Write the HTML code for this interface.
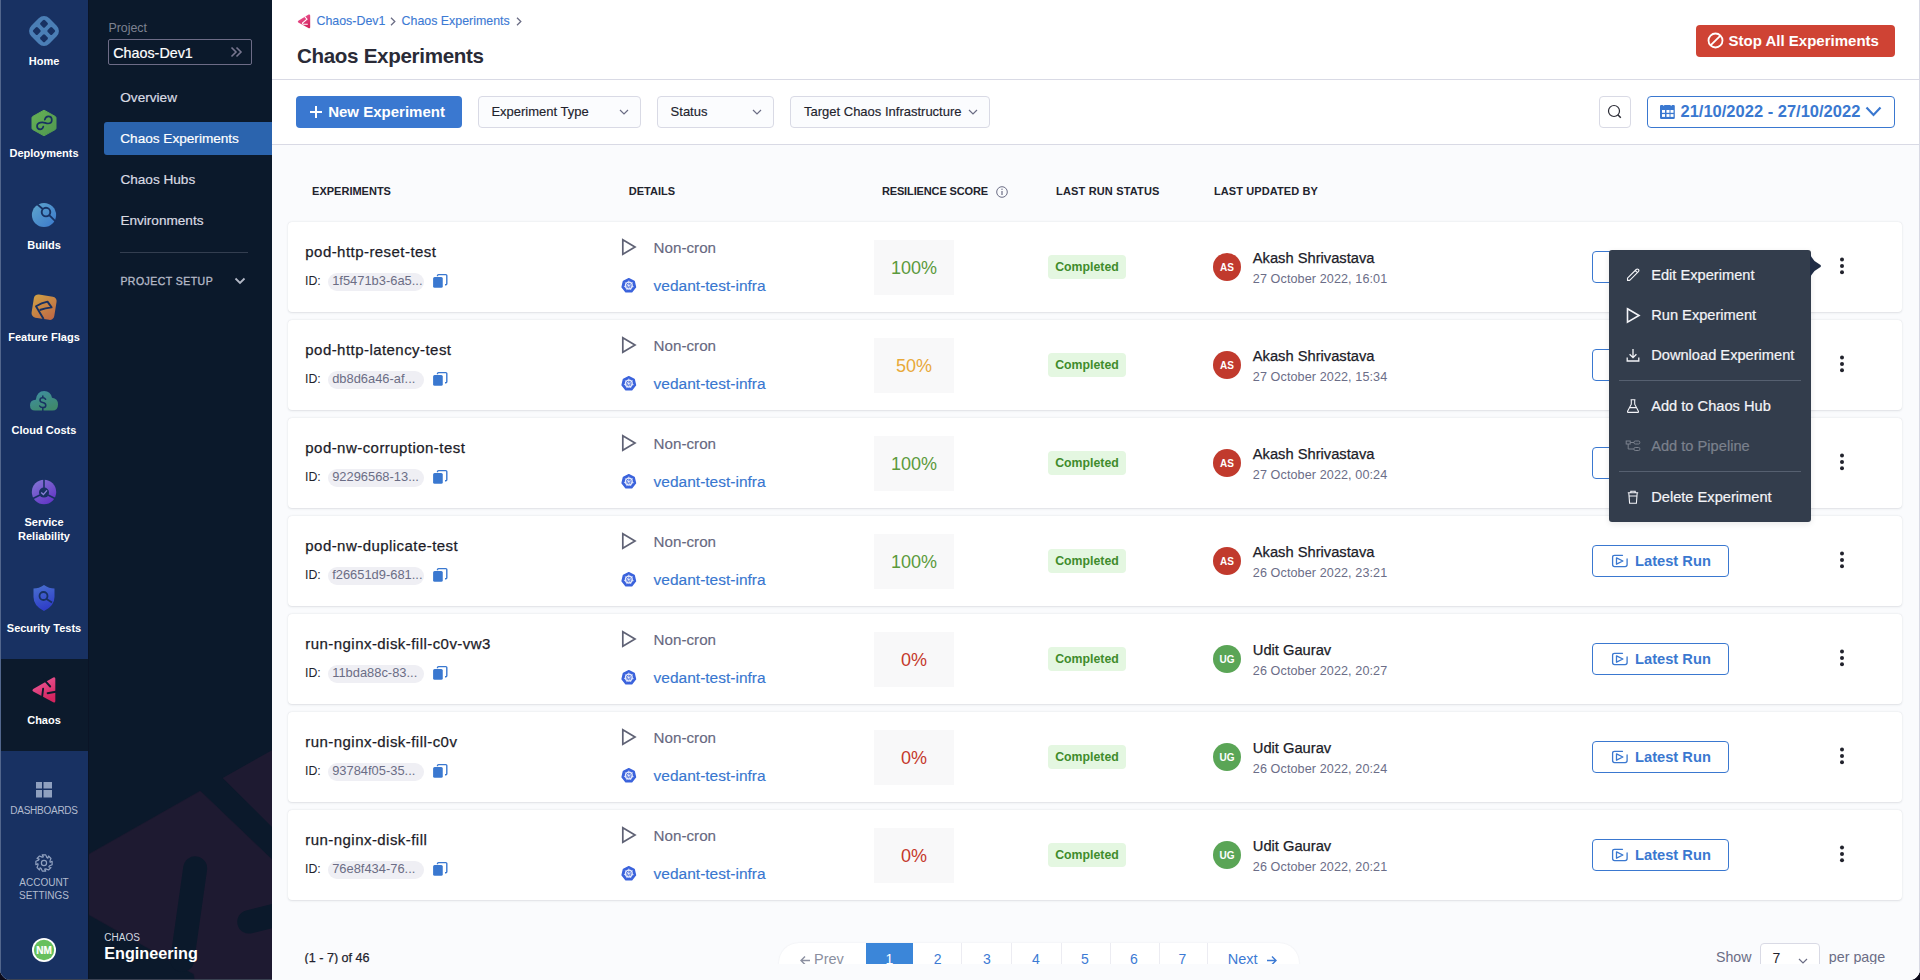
<!DOCTYPE html>
<html><head><meta charset="utf-8">
<style>
*{box-sizing:border-box;margin:0;padding:0}
html,body{width:1920px;height:980px;overflow:hidden;background:#0b0a1a;font-family:"Liberation Sans",sans-serif}
.abs{position:absolute}
svg.abs{overflow:visible}
#app{position:absolute;left:0;top:0;width:1920px;height:980px;border-radius:0 0 11px 11px;overflow:hidden;background:#fafbfd}
.t{position:absolute;white-space:nowrap;line-height:1}
</style></head><body>
<div id='app'>
<div class="abs" style="left:0px;top:0px;width:88px;height:980px;background:#183162"></div>
<div class="abs" style="left:0px;top:0px;width:1px;height:980px;background:#52668c"></div>
<div class="abs" style="left:88px;top:0px;width:1px;height:980px;background:#0a1426"></div>
<div class="abs" style="left:1px;top:659px;width:87px;height:92px;background:#0c1a2c"></div>
<svg class="abs" style="left:29px;top:16px;" width="30" height="30" viewBox="0 0 30 30"><g transform="rotate(45 15 15)"><rect x="2.25" y="2.25" width="25.5" height="25.5" rx="7.5" fill="#4b7fb6"/><rect x="6.7" y="6.7" width="6.4" height="6.4" rx="1.5" fill="#183162"/><rect x="16.9" y="6.7" width="6.4" height="6.4" rx="1.5" fill="#183162"/><rect x="6.7" y="16.9" width="6.4" height="6.4" rx="1.5" fill="#183162"/><rect x="16.9" y="16.9" width="6.4" height="6.4" rx="1.5" fill="#183162"/></g></svg>
<div class="t" style="left:0.00px;width:88px;text-align:center;top:55.69px;font-size:11px;color:#fff;font-weight:700;">Home</div>
<svg class="abs" style="left:31px;top:109px;" width="26" height="28" viewBox="0 0 26 28"><defs><linearGradient id="gd" x1="0" y1="0" x2="1" y2="1"><stop offset="0" stop-color="#66b155"/><stop offset="1" stop-color="#4f9650"/></linearGradient></defs><path d="M13 1.2 L24.2 7.4 Q25 7.9 25 8.8 L25 19.2 Q25 20.1 24.2 20.6 L13 26.8 L1.8 20.6 Q1 20.1 1 19.2 L1 8.8 Q1 7.9 1.8 7.4 Z" fill="url(#gd)" stroke="url(#gd)" stroke-width="1" stroke-linejoin="round"/><path d="M13.8 10.6 C14.3 8.7 15.6 7.4 17.3 7.4 C19.3 7.4 20.8 9 20.8 11 C20.8 13 19.2 14.5 17 14.5 C15 14.5 13.5 13.4 11.5 13.3 C8.3 13.2 6 14.8 6 17 C6 18.9 7.4 20.3 9.2 20.3 C10.8 20.3 11.9 19.2 12.3 17.6" fill="none" stroke="#183162" stroke-width="1.7" stroke-linecap="round"/></svg>
<div class="t" style="left:0.00px;width:88px;text-align:center;top:147.69px;font-size:11px;color:#fff;font-weight:700;">Deployments</div>
<svg class="abs" style="left:31px;top:202px;" width="26" height="26" viewBox="0 0 26 26"><defs><linearGradient id="gb" x1="0" y1="0" x2="1" y2="1"><stop offset="0" stop-color="#5fa6cc"/><stop offset="1" stop-color="#3a78cc"/></linearGradient></defs><circle cx="13" cy="13" r="12.1" fill="url(#gb)"/><circle cx="15" cy="10.1" r="4.3" fill="none" stroke="#183162" stroke-width="1.9"/><line x1="5.5" y1="1.6" x2="12" y2="7.3" stroke="#183162" stroke-width="1.8"/><line x1="18.2" y1="13.2" x2="24.8" y2="19.6" stroke="#183162" stroke-width="1.8"/></svg>
<div class="t" style="left:0.00px;width:88px;text-align:center;top:239.69px;font-size:11px;color:#fff;font-weight:700;">Builds</div>
<svg class="abs" style="left:30px;top:293px;" width="28" height="28" viewBox="0 0 28 28"><defs><linearGradient id="gf" x1="0" y1="0" x2="1" y2="1"><stop offset="0" stop-color="#d0a245"/><stop offset="1" stop-color="#bd6545"/></linearGradient></defs><rect x="2.6" y="2.4" width="23" height="23.5" rx="4.5" fill="url(#gf)" transform="rotate(9 14 14)"/><path d="M13.6 26 L6 13.2 Q11.5 9.8 17.5 8.6 L21.6 14.4 Q15.5 15 9.7 17" fill="none" stroke="#183162" stroke-width="1.9" stroke-linejoin="round"/></svg>
<div class="t" style="left:0.00px;width:88px;text-align:center;top:331.69px;font-size:11px;color:#fff;font-weight:700;">Feature Flags</div>
<svg class="abs" style="left:29px;top:389px;" width="30" height="23" viewBox="0 0 30 23"><defs><linearGradient id="gc" x1="0" y1="0" x2="0.6" y2="1"><stop offset="0" stop-color="#3f8fa6"/><stop offset="1" stop-color="#3f8a6c"/></linearGradient></defs><path d="M6 21.5 Q1 21.5 1 16.3 Q1 11.2 6.8 10.8 Q8 2 15.2 2 Q21.5 2 23 8.8 Q29 9.5 29 15.5 Q29 21.5 23.5 21.5 Z" fill="url(#gc)"/><g transform="translate(-1.2 0)"><path d="M17.8 10.3 Q17 8.8 15 8.8 Q12.2 8.8 12.2 11 Q12.2 13 15 13.6 Q18 14.3 18 16.4 Q18 18.6 15 18.6 Q12.6 18.6 11.9 17" fill="none" stroke="#183162" stroke-width="1.5" stroke-linecap="round"/><line x1="15" y1="6.5" x2="15" y2="8.8" stroke="#183162" stroke-width="1.5"/><line x1="15" y1="18.6" x2="15" y2="22" stroke="#183162" stroke-width="1.5"/></g></svg>
<div class="t" style="left:0.00px;width:88px;text-align:center;top:424.69px;font-size:11px;color:#fff;font-weight:700;">Cloud Costs</div>
<svg class="abs" style="left:31px;top:479px;" width="26" height="26" viewBox="0 0 26 26"><defs><linearGradient id="gs" x1="0" y1="0" x2="0.7" y2="1"><stop offset="0" stop-color="#8579d4"/><stop offset="1" stop-color="#6236c6"/></linearGradient></defs><circle cx="13" cy="13" r="12.2" fill="url(#gs)"/><circle cx="13" cy="13.6" r="5" fill="#183162"/><line x1="13" y1="0" x2="13" y2="9" stroke="#183162" stroke-width="1.6"/><line x1="9" y1="16" x2="1.5" y2="19.8" stroke="#183162" stroke-width="1.6"/><line x1="17" y1="16" x2="24.5" y2="19.8" stroke="#183162" stroke-width="1.6"/><path d="M10.2 13.6 L12.4 15.6 L16 11.4" fill="none" stroke="#8a80d8" stroke-width="1.4"/></svg>
<div class="t" style="left:0.00px;width:88px;text-align:center;top:517.29px;font-size:11px;color:#fff;font-weight:700;">Service</div>
<div class="t" style="left:0.00px;width:88px;text-align:center;top:530.89px;font-size:11px;color:#fff;font-weight:700;">Reliability</div>
<svg class="abs" style="left:32px;top:584px;" width="24" height="28" viewBox="0 0 24 28"><defs><linearGradient id="gt" x1="0" y1="0" x2="0.3" y2="1"><stop offset="0" stop-color="#4a72d0"/><stop offset="1" stop-color="#2f3ec8"/></linearGradient></defs><path d="M12 1 Q17 4.5 22.5 4.5 L22.5 13 Q22.5 22 12 27 Q1.5 22 1.5 13 L1.5 4.5 Q7 4.5 12 1 Z" fill="url(#gt)"/><circle cx="11.5" cy="12" r="4" fill="none" stroke="#183162" stroke-width="1.8"/><line x1="14.5" y1="15" x2="20" y2="18.5" stroke="#183162" stroke-width="1.8"/></svg>
<div class="t" style="left:0.00px;width:88px;text-align:center;top:622.69px;font-size:11px;color:#fff;font-weight:700;">Security Tests</div>
<svg class="abs" style="left:31px;top:675px;" width="26" height="30" viewBox="0 0 26 30"><defs><linearGradient id="gch" x1="0" y1="0" x2="0.5" y2="1"><stop offset="0" stop-color="#ee62a0"/><stop offset="1" stop-color="#d4245f"/></linearGradient></defs><path d="M22.3 2.4 Q24.3 1.6 24.3 3.8 L24.3 26 Q24.3 28.2 22.3 27.3 L2.2 16.6 Q0.4 15.2 2.2 14 Z" fill="url(#gch)"/><g stroke="#0c1a2c" stroke-width="1.9" stroke-linecap="round"><line x1="13" y1="4.6" x2="19.2" y2="11.5"/><line x1="11" y1="23" x2="12.1" y2="13.8"/><line x1="26" y1="16.5" x2="16.6" y2="18.2"/></g></svg>
<div class="t" style="left:0.00px;width:88px;text-align:center;top:714.69px;font-size:11px;color:#fff;font-weight:700;">Chaos</div>
<svg class="abs" style="left:36px;top:782px;" width="16" height="16" viewBox="0 0 16 16"><rect x="0" y="0" width="6" height="6.5" fill="#8fa0bf"/><rect x="7.5" y="0" width="8.5" height="6.5" fill="#8fa0bf"/><rect x="0" y="8" width="6" height="7.5" fill="#8fa0bf"/><rect x="7.5" y="8" width="8.5" height="7.5" fill="#8fa0bf"/></svg>
<div class="t" style="left:0.00px;width:88px;text-align:center;top:805.53px;font-size:10px;color:#b3bccf;font-weight:400;letter-spacing:-0.25px">DASHBOARDS</div>
<svg class="abs" style="left:36px;top:855px;" width="16" height="16" viewBox="0 0 16 16"><path d="M16.12 6.27 L16.12 9.73 L13.51 10.84 L12.84 11.88 L14.96 12.52 L12.52 14.96 L9.89 13.91 L8.68 14.16 L9.73 16.12 L6.27 16.12 L5.16 13.51 L4.12 12.84 L3.48 14.96 L1.04 12.52 L2.09 9.89 L1.84 8.68 L-0.12 9.73 L-0.12 6.27 L2.49 5.16 L3.16 4.12 L1.04 3.48 L3.48 1.04 L6.11 2.09 L7.32 1.84 L6.27 -0.12 L9.73 -0.12 L10.84 2.49 L11.88 3.16 L12.52 1.04 L14.96 3.48 L13.91 6.11 L14.16 7.32Z" fill="none" stroke="#8fa0bf" stroke-width="1.2" stroke-linejoin="round"/><circle cx="8" cy="8" r="2.6" fill="none" stroke="#8fa0bf" stroke-width="1.2"/></svg>
<div class="t" style="left:0.00px;width:88px;text-align:center;top:878.33px;font-size:10px;color:#b3bccf;font-weight:400;">ACCOUNT</div>
<div class="t" style="left:0.00px;width:88px;text-align:center;top:891.13px;font-size:10px;color:#b3bccf;font-weight:400;">SETTINGS</div>
<svg class="abs" style="left:31px;top:937px;" width="26" height="26" viewBox="0 0 26 26"><circle cx="13" cy="13" r="12" fill="#fff"/><circle cx="13" cy="13" r="10.2" fill="#67c05d"/></svg>
<div class="t" style="left:24.20px;width:40px;text-align:center;top:945.53px;font-size:10px;color:#fff;font-weight:700;letter-spacing:0.2px;-webkit-text-stroke:0.2px #fff">NM</div>
<div class="abs" style="left:89px;top:0px;width:183px;height:980px;background:#0b192b"></div>
<svg class="abs" style="left:89px;top:700px;overflow:hidden" width="183" height="280" viewBox="0 0 183 280"><g transform="translate(-89 -700)"><polygon points="222.7,778 272,750.2 272,826.9" fill="#1e1a31"/><polygon points="200.3,791 272,859.6 272,990 197,990 193.7,974 88,914.3 88,854.7" fill="#1e1a31" stroke="#1e1a31" stroke-width="0.5" stroke-linejoin="round"/><line x1="195.2" y1="868.3" x2="182.2" y2="960" stroke="#0b192b" stroke-width="24" stroke-linecap="round"/><line x1="249" y1="921.8" x2="300" y2="909" stroke="#0b192b" stroke-width="23.5" stroke-linecap="round"/></g></svg>
<div class="abs" style="left:1px;top:979px;width:271px;height:1px;background:#3b4252"></div>
<div class="t" style="left:108.4px;top:21.70px;font-size:12.4px;color:#7d8291;font-weight:400;">Project</div>
<div class="abs" style="left:108px;top:39px;width:144px;height:26px;border:1px solid #6d6c87;border-radius:2px"></div>
<div class="t" style="left:113.3px;top:46.10px;font-size:14.3px;color:#fff;font-weight:400;-webkit-text-stroke:0.2px #fff">Chaos-Dev1</div>
<svg class="abs" style="left:230px;top:46px;" width="13" height="12" viewBox="0 0 13 12"><path d="M1.5 1.5 L6 6 L1.5 10.5 M6.5 1.5 L11 6 L6.5 10.5" fill="none" stroke="#77768f" stroke-width="1.6"/></svg>
<div class="t" style="left:120.3px;top:91.09px;font-size:13.6px;color:#d9dbe3;font-weight:400;-webkit-text-stroke:0.2px #d9dbe3">Overview</div>
<div class="abs" style="left:104px;top:122px;width:168px;height:33px;background:#2b64ae;border-radius:3px 0 0 3px"></div>
<div class="t" style="left:120.3px;top:131.69px;font-size:13.6px;color:#fff;font-weight:400;-webkit-text-stroke:0.2px #fff">Chaos Experiments</div>
<div class="t" style="left:120.4px;top:173.49px;font-size:13.6px;color:#d9dbe3;font-weight:400;-webkit-text-stroke:0.2px #d9dbe3">Chaos Hubs</div>
<div class="t" style="left:120.4px;top:214.49px;font-size:13.6px;color:#d9dbe3;font-weight:400;-webkit-text-stroke:0.2px #d9dbe3">Environments</div>
<div class="abs" style="left:120px;top:252px;width:128px;height:1px;background:#333e50"></div>
<div class="t" style="left:120.4px;top:276.11px;font-size:10.5px;color:#b3b8c6;font-weight:400;letter-spacing:0.46px;-webkit-text-stroke:0.35px #b3b8c6">PROJECT SETUP</div>
<svg class="abs" style="left:234px;top:277px;" width="12" height="8" viewBox="0 0 12 8"><path d="M1.5 1.5 L6 6 L10.5 1.5" fill="none" stroke="#b3b8c6" stroke-width="1.8"/></svg>
<div class="t" style="left:104.3px;top:932.63px;font-size:10px;color:#d5d8e0;font-weight:400;">CHAOS</div>
<div class="t" style="left:104.3px;top:945.29px;font-size:16.2px;color:#fff;font-weight:700;">Engineering</div>
<div class="abs" style="left:272px;top:0px;width:1648px;height:980px;background:#fafbfd"></div>
<div class="abs" style="left:272px;top:0px;width:1647px;height:79px;background:#fff"></div>
<div class="abs" style="left:272px;top:79px;width:1647px;height:1px;background:#d9dae5"></div>
<div class="abs" style="left:272px;top:80px;width:1647px;height:64px;background:#fff"></div>
<div class="abs" style="left:272px;top:144px;width:1647px;height:1px;background:#d9dae5"></div>
<div class="abs" style="left:1919px;top:0px;width:1px;height:980px;background:#d8d9e4"></div>
<svg class="abs" style="left:297px;top:14px;" width="14" height="15" viewBox="0 0 14 15"><defs><linearGradient id="gbc" x1="0" y1="0" x2="0.5" y2="1"><stop offset="0" stop-color="#ee5e9a"/><stop offset="1" stop-color="#d4245f"/></linearGradient></defs><path d="M11.6 0.6 Q13.2 0.2 13.2 1.8 L13.2 13.2 Q13.2 14.8 11.8 14.2 L1.3 8.6 Q0.2 7.8 1.3 6.8 Z" fill="url(#gbc)"/><path d="M7.8 2.6 L10 5.2 L5.4 9.2 L6 10.3 L10.8 10.3" fill="none" stroke="#fff" stroke-width="1.1"/></svg>
<div class="t" style="left:316.5px;top:15.10px;font-size:12.4px;color:#3c7ad4;font-weight:400;-webkit-text-stroke:0.12px #3c7ad4">Chaos-Dev1</div>
<svg class="abs" style="left:389px;top:16px;" width="8" height="11" viewBox="0 0 8 11"><path d="M2 1.8 L5.8 5.5 L2 9.2" fill="none" stroke="#6b6d85" stroke-width="1.3"/></svg>
<div class="t" style="left:401.6px;top:15.10px;font-size:12.4px;color:#3c7ad4;font-weight:400;-webkit-text-stroke:0.12px #3c7ad4">Chaos Experiments</div>
<svg class="abs" style="left:515px;top:16px;" width="8" height="11" viewBox="0 0 8 11"><path d="M2 1.8 L5.8 5.5 L2 9.2" fill="none" stroke="#6b6d85" stroke-width="1.3"/></svg>
<div class="t" style="left:296.9px;top:45.86px;font-size:20.6px;color:#2a2b37;font-weight:700;letter-spacing:-0.32px;">Chaos Experiments</div>
<div class="abs" style="left:1696px;top:25px;width:199px;height:32px;background:#cf4334;border-radius:4px"></div>
<svg class="abs" style="left:1707px;top:32px;" width="17" height="17" viewBox="0 0 17 17"><circle cx="8.5" cy="8.5" r="7" fill="none" stroke="#fff" stroke-width="1.8"/><line x1="3.8" y1="13.2" x2="13.2" y2="3.8" stroke="#fff" stroke-width="1.8"/></svg>
<div class="t" style="left:1728.6px;top:33.10px;font-size:15px;color:#fff;font-weight:700;">Stop All Experiments</div>
<div class="abs" style="left:296px;top:96px;width:166px;height:32px;background:#3a78d0;border-radius:4px"></div>
<svg class="abs" style="left:309px;top:105px;" width="14" height="14" viewBox="0 0 14 14"><path d="M7 1 V13 M1 7 H13" stroke="#fff" stroke-width="2"/></svg>
<div class="t" style="left:328.2px;top:103.80px;font-size:15px;color:#fff;font-weight:700;">New Experiment</div>
<div class="abs" style="left:478px;top:96px;width:163px;height:32px;background:#fbfcfe;border:1px solid #d9dae5;border-radius:4px"></div>
<div class="t" style="left:491.4px;top:105.40px;font-size:13px;color:#22232d;font-weight:400;-webkit-text-stroke:0.15px #22232d">Experiment Type</div>
<svg class="abs" style="left:619px;top:109px;" width="10" height="6" viewBox="0 0 10 6"><path d="M1 1 L5 5 L9 1" fill="none" stroke="#6b6d85" stroke-width="1.2"/></svg>
<div class="abs" style="left:657px;top:96px;width:117px;height:32px;background:#fbfcfe;border:1px solid #d9dae5;border-radius:4px"></div>
<div class="t" style="left:670.6px;top:105.40px;font-size:13px;color:#22232d;font-weight:400;-webkit-text-stroke:0.15px #22232d">Status</div>
<svg class="abs" style="left:752px;top:109px;" width="10" height="6" viewBox="0 0 10 6"><path d="M1 1 L5 5 L9 1" fill="none" stroke="#6b6d85" stroke-width="1.2"/></svg>
<div class="abs" style="left:790px;top:96px;width:200px;height:32px;background:#fbfcfe;border:1px solid #d9dae5;border-radius:4px"></div>
<div class="t" style="left:804px;top:105.40px;font-size:13px;color:#22232d;font-weight:400;-webkit-text-stroke:0.15px #22232d">Target Chaos Infrastructure</div>
<svg class="abs" style="left:968px;top:109px;" width="10" height="6" viewBox="0 0 10 6"><path d="M1 1 L5 5 L9 1" fill="none" stroke="#6b6d85" stroke-width="1.2"/></svg>
<div class="abs" style="left:1599px;top:96px;width:32px;height:32px;background:#fff;border:1px solid #d9dae5;border-radius:4px"></div>
<svg class="abs" style="left:1607px;top:104px;" width="16" height="16" viewBox="0 0 16 16"><circle cx="7" cy="7" r="5.5" fill="none" stroke="#2a2b35" stroke-width="1.2"/><line x1="10.8" y1="10.8" x2="13.8" y2="13.8" stroke="#2a2b35" stroke-width="1.5"/></svg>
<div class="abs" style="left:1647px;top:96px;width:248px;height:32px;background:#fff;border:1px solid #3a78d0;border-radius:4px"></div>
<svg class="abs" style="left:1660px;top:104px;" width="15" height="15" viewBox="0 0 15 15"><rect x="0" y="0.9" width="14.8" height="14" rx="1.2" fill="#3a78d0"/><g fill="#fff"><circle cx="3.6" cy="0.9" r="0.8"/><circle cx="11.2" cy="0.9" r="0.8"/><rect x="2" y="6" width="3" height="2.8"/><rect x="6.5" y="6" width="3" height="2.8"/><rect x="10.5" y="6" width="3" height="2.8"/><rect x="2" y="10.1" width="3" height="2.8"/><rect x="6.5" y="10.1" width="3" height="2.8"/><rect x="10.5" y="10.1" width="3" height="2.8"/></g></svg>
<div class="t" style="left:1680.5px;top:103.33px;font-size:16.5px;color:#3a78d0;font-weight:700;">21/10/2022 - 27/10/2022</div>
<svg class="abs" style="left:1865px;top:106px;" width="17" height="11" viewBox="0 0 17 11"><path d="M1.5 1.5 L8.5 9 L15.5 1.5" fill="none" stroke="#3a78d0" stroke-width="2.2"/></svg>
<div class="t" style="left:312.1px;top:186.19px;font-size:11px;color:#22232d;font-weight:700;">EXPERIMENTS</div>
<div class="t" style="left:628.8px;top:186.19px;font-size:11px;color:#22232d;font-weight:700;">DETAILS</div>
<div class="t" style="left:881.9px;top:186.19px;font-size:11px;color:#22232d;font-weight:700;letter-spacing:-0.13px;">RESILIENCE SCORE</div>
<svg class="abs" style="left:996px;top:186px;" width="12" height="12" viewBox="0 0 12 12"><circle cx="6" cy="6" r="5.3" fill="none" stroke="#6b6d85" stroke-width="1"/><line x1="6" y1="5" x2="6" y2="9" stroke="#6b6d85" stroke-width="1.2"/><circle cx="6" cy="3.2" r="0.7" fill="#6b6d85"/></svg>
<div class="t" style="left:1056px;top:186.19px;font-size:11px;color:#22232d;font-weight:700;letter-spacing:0.17px;">LAST RUN STATUS</div>
<div class="t" style="left:1214px;top:186.19px;font-size:11px;color:#22232d;font-weight:700;letter-spacing:0.1px;">LAST UPDATED BY</div>
<div class="abs" style="left:288px;top:222px;width:1614px;height:90px;background:#fff;border-radius:4px;box-shadow:0 0 1px rgba(40,41,61,0.08),0 0.5px 2px rgba(96,97,112,0.16)"></div>
<div class="t" style="left:305.3px;top:244.30px;font-size:15px;color:#1c1c28;font-weight:400;letter-spacing:0.45px;-webkit-text-stroke:0.25px #1c1c28">pod-http-reset-test</div>
<div class="t" style="left:305px;top:275.39px;font-size:12.3px;color:#22232d;font-weight:400;">ID:</div>
<div class="abs" style="left:328px;top:273px;width:96px;height:18px;background:#efeff4;border-radius:9px"></div>
<div class="t" style="left:332.2px;top:275.48px;font-size:12.9px;color:#6b6d85;font-weight:400;">1f5471b3-6a5...</div>
<svg class="abs" style="left:432px;top:273px;" width="16" height="16" viewBox="0 0 16 16"><path d="M5.5 3.3 V2.6 Q5.5 1.6 6.5 1.6 H13.8 Q14.8 1.6 14.8 2.6 V10.8 Q14.8 11.8 13.8 11.8 H13" fill="none" stroke="#3a78d0" stroke-width="1.4"/><rect x="1.1" y="4.1" width="9.65" height="10.7" rx="1.5" fill="#3a78d0"/></svg>
<svg class="abs" style="left:621px;top:238px;" width="16" height="18" viewBox="0 0 16 18"><path d="M1.8 1.8 L14 9 L1.8 16.2 Z" fill="none" stroke="#5f6275" stroke-width="1.7" stroke-linejoin="miter"/></svg>
<div class="t" style="left:653.6px;top:240.23px;font-size:15.2px;color:#676981;font-weight:400;-webkit-text-stroke:0.15px #676981">Non-cron</div>
<svg class="abs" style="left:621.3px;top:277.5px;" width="16" height="16" viewBox="0 0 16 16"><polygon points="7.80,0.70 13.19,3.30 14.53,9.14 10.79,13.82 4.81,13.82 1.07,9.14 2.41,3.30" fill="#3a62dc" stroke="#3a62dc" stroke-width="1.4" stroke-linejoin="round"/><circle cx="7.8" cy="7.6" r="3.4" fill="none" stroke="#e8ecfb" stroke-width="1.3"/><circle cx="7.8" cy="7.6" r="1.0" fill="#e8ecfb"/><g stroke="#e8ecfb" stroke-width="0.8"><line x1="7.80" y1="6.60" x2="7.80" y2="2.60"/><line x1="8.58" y1="6.98" x2="11.71" y2="4.48"/><line x1="8.77" y1="7.82" x2="12.67" y2="8.71"/><line x1="8.23" y1="8.50" x2="9.97" y2="12.10"/><line x1="7.37" y1="8.50" x2="5.63" y2="12.10"/><line x1="6.83" y1="7.82" x2="2.93" y2="8.71"/><line x1="7.02" y1="6.98" x2="3.89" y2="4.48"/></g></svg>
<div class="t" style="left:653.6px;top:277.78px;font-size:15.5px;color:#3977d0;font-weight:400;-webkit-text-stroke:0.15px #3977d0">vedant-test-infra</div>
<div class="abs" style="left:874px;top:240px;width:80px;height:55px;background:#f8f8f9"></div>
<div class="t" style="left:874.00px;width:80px;text-align:center;top:258.66px;font-size:18px;color:#5b9a3c;font-weight:400;">100%</div>
<div class="abs" style="left:1048px;top:255px;width:78px;height:24px;background:#e4f7e1;border-radius:4px"></div>
<div class="t" style="left:1048.00px;width:78px;text-align:center;top:261.09px;font-size:12.3px;color:#3f8c2c;font-weight:700;">Completed</div>
<svg class="abs" style="left:1213px;top:253px;" width="28" height="28" viewBox="0 0 28 28"><circle cx="14" cy="14" r="14" fill="#c13a2d"/></svg>
<div class="t" style="left:1213.00px;width:28px;text-align:center;top:262.54px;font-size:10px;color:#fff;font-weight:700;">AS</div>
<div class="t" style="left:1252.8px;top:250.56px;font-size:14.7px;color:#1c1c28;font-weight:400;-webkit-text-stroke:0.25px #1c1c28">Akash Shrivastava</div>
<div class="t" style="left:1252.8px;top:273.13px;font-size:12.6px;color:#6b6d87;font-weight:400;letter-spacing:0.1px;">27 October 2022, 16:01</div>
<div class="abs" style="left:1592px;top:251px;width:137px;height:32px;background:#fff;border:1.5px solid #3a78d0;border-radius:4px"></div>
<svg class="abs" style="left:1611px;top:260px;" width="18" height="14" viewBox="0 0 18 14"><path d="M11.5 1.3 H3.6 Q1.6 1.3 1.6 3.3 V10.6 Q1.6 12.6 3.6 12.6 H14.1 Q16.1 12.6 16.1 10.6 V4.9" fill="none" stroke="#3a78d0" stroke-width="1.3" stroke-linecap="round"/><path d="M5.5 3.8 L11.9 7 L5.5 10.2 Z" fill="none" stroke="#3a78d0" stroke-width="1.3" stroke-linejoin="round"/></svg>
<div class="t" style="left:1635px;top:259.81px;font-size:14.7px;color:#3a78d0;font-weight:700;">Latest Run</div>
<svg class="abs" style="left:1838px;top:256px;" width="8" height="20" viewBox="0 0 8 20"><circle cx="4" cy="3.4" r="2" fill="#22232d"/><circle cx="4" cy="10" r="2" fill="#22232d"/><circle cx="4" cy="16.3" r="2" fill="#22232d"/></svg>
<div class="abs" style="left:288px;top:320px;width:1614px;height:90px;background:#fff;border-radius:4px;box-shadow:0 0 1px rgba(40,41,61,0.08),0 0.5px 2px rgba(96,97,112,0.16)"></div>
<div class="t" style="left:305.3px;top:342.30px;font-size:15px;color:#1c1c28;font-weight:400;letter-spacing:0.45px;-webkit-text-stroke:0.25px #1c1c28">pod-http-latency-test</div>
<div class="t" style="left:305px;top:373.39px;font-size:12.3px;color:#22232d;font-weight:400;">ID:</div>
<div class="abs" style="left:328px;top:371px;width:96px;height:18px;background:#efeff4;border-radius:9px"></div>
<div class="t" style="left:332.2px;top:373.48px;font-size:12.9px;color:#6b6d85;font-weight:400;">db8d6a46-af...</div>
<svg class="abs" style="left:432px;top:371px;" width="16" height="16" viewBox="0 0 16 16"><path d="M5.5 3.3 V2.6 Q5.5 1.6 6.5 1.6 H13.8 Q14.8 1.6 14.8 2.6 V10.8 Q14.8 11.8 13.8 11.8 H13" fill="none" stroke="#3a78d0" stroke-width="1.4"/><rect x="1.1" y="4.1" width="9.65" height="10.7" rx="1.5" fill="#3a78d0"/></svg>
<svg class="abs" style="left:621px;top:336px;" width="16" height="18" viewBox="0 0 16 18"><path d="M1.8 1.8 L14 9 L1.8 16.2 Z" fill="none" stroke="#5f6275" stroke-width="1.7" stroke-linejoin="miter"/></svg>
<div class="t" style="left:653.6px;top:338.23px;font-size:15.2px;color:#676981;font-weight:400;-webkit-text-stroke:0.15px #676981">Non-cron</div>
<svg class="abs" style="left:621.3px;top:375.5px;" width="16" height="16" viewBox="0 0 16 16"><polygon points="7.80,0.70 13.19,3.30 14.53,9.14 10.79,13.82 4.81,13.82 1.07,9.14 2.41,3.30" fill="#3a62dc" stroke="#3a62dc" stroke-width="1.4" stroke-linejoin="round"/><circle cx="7.8" cy="7.6" r="3.4" fill="none" stroke="#e8ecfb" stroke-width="1.3"/><circle cx="7.8" cy="7.6" r="1.0" fill="#e8ecfb"/><g stroke="#e8ecfb" stroke-width="0.8"><line x1="7.80" y1="6.60" x2="7.80" y2="2.60"/><line x1="8.58" y1="6.98" x2="11.71" y2="4.48"/><line x1="8.77" y1="7.82" x2="12.67" y2="8.71"/><line x1="8.23" y1="8.50" x2="9.97" y2="12.10"/><line x1="7.37" y1="8.50" x2="5.63" y2="12.10"/><line x1="6.83" y1="7.82" x2="2.93" y2="8.71"/><line x1="7.02" y1="6.98" x2="3.89" y2="4.48"/></g></svg>
<div class="t" style="left:653.6px;top:375.78px;font-size:15.5px;color:#3977d0;font-weight:400;-webkit-text-stroke:0.15px #3977d0">vedant-test-infra</div>
<div class="abs" style="left:874px;top:338px;width:80px;height:55px;background:#f8f8f9"></div>
<div class="t" style="left:874.00px;width:80px;text-align:center;top:356.66px;font-size:18px;color:#e8a93a;font-weight:400;">50%</div>
<div class="abs" style="left:1048px;top:353px;width:78px;height:24px;background:#e4f7e1;border-radius:4px"></div>
<div class="t" style="left:1048.00px;width:78px;text-align:center;top:359.09px;font-size:12.3px;color:#3f8c2c;font-weight:700;">Completed</div>
<svg class="abs" style="left:1213px;top:351px;" width="28" height="28" viewBox="0 0 28 28"><circle cx="14" cy="14" r="14" fill="#c13a2d"/></svg>
<div class="t" style="left:1213.00px;width:28px;text-align:center;top:360.54px;font-size:10px;color:#fff;font-weight:700;">AS</div>
<div class="t" style="left:1252.8px;top:348.56px;font-size:14.7px;color:#1c1c28;font-weight:400;-webkit-text-stroke:0.25px #1c1c28">Akash Shrivastava</div>
<div class="t" style="left:1252.8px;top:371.13px;font-size:12.6px;color:#6b6d87;font-weight:400;letter-spacing:0.1px;">27 October 2022, 15:34</div>
<div class="abs" style="left:1592px;top:349px;width:137px;height:32px;background:#fff;border:1.5px solid #3a78d0;border-radius:4px"></div>
<svg class="abs" style="left:1611px;top:358px;" width="18" height="14" viewBox="0 0 18 14"><path d="M11.5 1.3 H3.6 Q1.6 1.3 1.6 3.3 V10.6 Q1.6 12.6 3.6 12.6 H14.1 Q16.1 12.6 16.1 10.6 V4.9" fill="none" stroke="#3a78d0" stroke-width="1.3" stroke-linecap="round"/><path d="M5.5 3.8 L11.9 7 L5.5 10.2 Z" fill="none" stroke="#3a78d0" stroke-width="1.3" stroke-linejoin="round"/></svg>
<div class="t" style="left:1635px;top:357.81px;font-size:14.7px;color:#3a78d0;font-weight:700;">Latest Run</div>
<svg class="abs" style="left:1838px;top:354px;" width="8" height="20" viewBox="0 0 8 20"><circle cx="4" cy="3.4" r="2" fill="#22232d"/><circle cx="4" cy="10" r="2" fill="#22232d"/><circle cx="4" cy="16.3" r="2" fill="#22232d"/></svg>
<div class="abs" style="left:288px;top:418px;width:1614px;height:90px;background:#fff;border-radius:4px;box-shadow:0 0 1px rgba(40,41,61,0.08),0 0.5px 2px rgba(96,97,112,0.16)"></div>
<div class="t" style="left:305.3px;top:440.30px;font-size:15px;color:#1c1c28;font-weight:400;letter-spacing:0.45px;-webkit-text-stroke:0.25px #1c1c28">pod-nw-corruption-test</div>
<div class="t" style="left:305px;top:471.39px;font-size:12.3px;color:#22232d;font-weight:400;">ID:</div>
<div class="abs" style="left:328px;top:469px;width:96px;height:18px;background:#efeff4;border-radius:9px"></div>
<div class="t" style="left:332.2px;top:471.48px;font-size:12.9px;color:#6b6d85;font-weight:400;">92296568-13...</div>
<svg class="abs" style="left:432px;top:469px;" width="16" height="16" viewBox="0 0 16 16"><path d="M5.5 3.3 V2.6 Q5.5 1.6 6.5 1.6 H13.8 Q14.8 1.6 14.8 2.6 V10.8 Q14.8 11.8 13.8 11.8 H13" fill="none" stroke="#3a78d0" stroke-width="1.4"/><rect x="1.1" y="4.1" width="9.65" height="10.7" rx="1.5" fill="#3a78d0"/></svg>
<svg class="abs" style="left:621px;top:434px;" width="16" height="18" viewBox="0 0 16 18"><path d="M1.8 1.8 L14 9 L1.8 16.2 Z" fill="none" stroke="#5f6275" stroke-width="1.7" stroke-linejoin="miter"/></svg>
<div class="t" style="left:653.6px;top:436.23px;font-size:15.2px;color:#676981;font-weight:400;-webkit-text-stroke:0.15px #676981">Non-cron</div>
<svg class="abs" style="left:621.3px;top:473.5px;" width="16" height="16" viewBox="0 0 16 16"><polygon points="7.80,0.70 13.19,3.30 14.53,9.14 10.79,13.82 4.81,13.82 1.07,9.14 2.41,3.30" fill="#3a62dc" stroke="#3a62dc" stroke-width="1.4" stroke-linejoin="round"/><circle cx="7.8" cy="7.6" r="3.4" fill="none" stroke="#e8ecfb" stroke-width="1.3"/><circle cx="7.8" cy="7.6" r="1.0" fill="#e8ecfb"/><g stroke="#e8ecfb" stroke-width="0.8"><line x1="7.80" y1="6.60" x2="7.80" y2="2.60"/><line x1="8.58" y1="6.98" x2="11.71" y2="4.48"/><line x1="8.77" y1="7.82" x2="12.67" y2="8.71"/><line x1="8.23" y1="8.50" x2="9.97" y2="12.10"/><line x1="7.37" y1="8.50" x2="5.63" y2="12.10"/><line x1="6.83" y1="7.82" x2="2.93" y2="8.71"/><line x1="7.02" y1="6.98" x2="3.89" y2="4.48"/></g></svg>
<div class="t" style="left:653.6px;top:473.78px;font-size:15.5px;color:#3977d0;font-weight:400;-webkit-text-stroke:0.15px #3977d0">vedant-test-infra</div>
<div class="abs" style="left:874px;top:436px;width:80px;height:55px;background:#f8f8f9"></div>
<div class="t" style="left:874.00px;width:80px;text-align:center;top:454.66px;font-size:18px;color:#5b9a3c;font-weight:400;">100%</div>
<div class="abs" style="left:1048px;top:451px;width:78px;height:24px;background:#e4f7e1;border-radius:4px"></div>
<div class="t" style="left:1048.00px;width:78px;text-align:center;top:457.09px;font-size:12.3px;color:#3f8c2c;font-weight:700;">Completed</div>
<svg class="abs" style="left:1213px;top:449px;" width="28" height="28" viewBox="0 0 28 28"><circle cx="14" cy="14" r="14" fill="#c13a2d"/></svg>
<div class="t" style="left:1213.00px;width:28px;text-align:center;top:458.54px;font-size:10px;color:#fff;font-weight:700;">AS</div>
<div class="t" style="left:1252.8px;top:446.56px;font-size:14.7px;color:#1c1c28;font-weight:400;-webkit-text-stroke:0.25px #1c1c28">Akash Shrivastava</div>
<div class="t" style="left:1252.8px;top:469.13px;font-size:12.6px;color:#6b6d87;font-weight:400;letter-spacing:0.1px;">27 October 2022, 00:24</div>
<div class="abs" style="left:1592px;top:447px;width:137px;height:32px;background:#fff;border:1.5px solid #3a78d0;border-radius:4px"></div>
<svg class="abs" style="left:1611px;top:456px;" width="18" height="14" viewBox="0 0 18 14"><path d="M11.5 1.3 H3.6 Q1.6 1.3 1.6 3.3 V10.6 Q1.6 12.6 3.6 12.6 H14.1 Q16.1 12.6 16.1 10.6 V4.9" fill="none" stroke="#3a78d0" stroke-width="1.3" stroke-linecap="round"/><path d="M5.5 3.8 L11.9 7 L5.5 10.2 Z" fill="none" stroke="#3a78d0" stroke-width="1.3" stroke-linejoin="round"/></svg>
<div class="t" style="left:1635px;top:455.81px;font-size:14.7px;color:#3a78d0;font-weight:700;">Latest Run</div>
<svg class="abs" style="left:1838px;top:452px;" width="8" height="20" viewBox="0 0 8 20"><circle cx="4" cy="3.4" r="2" fill="#22232d"/><circle cx="4" cy="10" r="2" fill="#22232d"/><circle cx="4" cy="16.3" r="2" fill="#22232d"/></svg>
<div class="abs" style="left:288px;top:516px;width:1614px;height:90px;background:#fff;border-radius:4px;box-shadow:0 0 1px rgba(40,41,61,0.08),0 0.5px 2px rgba(96,97,112,0.16)"></div>
<div class="t" style="left:305.3px;top:538.30px;font-size:15px;color:#1c1c28;font-weight:400;letter-spacing:0.45px;-webkit-text-stroke:0.25px #1c1c28">pod-nw-duplicate-test</div>
<div class="t" style="left:305px;top:569.39px;font-size:12.3px;color:#22232d;font-weight:400;">ID:</div>
<div class="abs" style="left:328px;top:567px;width:96px;height:18px;background:#efeff4;border-radius:9px"></div>
<div class="t" style="left:332.2px;top:569.48px;font-size:12.9px;color:#6b6d85;font-weight:400;">f26651d9-681...</div>
<svg class="abs" style="left:432px;top:567px;" width="16" height="16" viewBox="0 0 16 16"><path d="M5.5 3.3 V2.6 Q5.5 1.6 6.5 1.6 H13.8 Q14.8 1.6 14.8 2.6 V10.8 Q14.8 11.8 13.8 11.8 H13" fill="none" stroke="#3a78d0" stroke-width="1.4"/><rect x="1.1" y="4.1" width="9.65" height="10.7" rx="1.5" fill="#3a78d0"/></svg>
<svg class="abs" style="left:621px;top:532px;" width="16" height="18" viewBox="0 0 16 18"><path d="M1.8 1.8 L14 9 L1.8 16.2 Z" fill="none" stroke="#5f6275" stroke-width="1.7" stroke-linejoin="miter"/></svg>
<div class="t" style="left:653.6px;top:534.23px;font-size:15.2px;color:#676981;font-weight:400;-webkit-text-stroke:0.15px #676981">Non-cron</div>
<svg class="abs" style="left:621.3px;top:571.5px;" width="16" height="16" viewBox="0 0 16 16"><polygon points="7.80,0.70 13.19,3.30 14.53,9.14 10.79,13.82 4.81,13.82 1.07,9.14 2.41,3.30" fill="#3a62dc" stroke="#3a62dc" stroke-width="1.4" stroke-linejoin="round"/><circle cx="7.8" cy="7.6" r="3.4" fill="none" stroke="#e8ecfb" stroke-width="1.3"/><circle cx="7.8" cy="7.6" r="1.0" fill="#e8ecfb"/><g stroke="#e8ecfb" stroke-width="0.8"><line x1="7.80" y1="6.60" x2="7.80" y2="2.60"/><line x1="8.58" y1="6.98" x2="11.71" y2="4.48"/><line x1="8.77" y1="7.82" x2="12.67" y2="8.71"/><line x1="8.23" y1="8.50" x2="9.97" y2="12.10"/><line x1="7.37" y1="8.50" x2="5.63" y2="12.10"/><line x1="6.83" y1="7.82" x2="2.93" y2="8.71"/><line x1="7.02" y1="6.98" x2="3.89" y2="4.48"/></g></svg>
<div class="t" style="left:653.6px;top:571.78px;font-size:15.5px;color:#3977d0;font-weight:400;-webkit-text-stroke:0.15px #3977d0">vedant-test-infra</div>
<div class="abs" style="left:874px;top:534px;width:80px;height:55px;background:#f8f8f9"></div>
<div class="t" style="left:874.00px;width:80px;text-align:center;top:552.66px;font-size:18px;color:#5b9a3c;font-weight:400;">100%</div>
<div class="abs" style="left:1048px;top:549px;width:78px;height:24px;background:#e4f7e1;border-radius:4px"></div>
<div class="t" style="left:1048.00px;width:78px;text-align:center;top:555.09px;font-size:12.3px;color:#3f8c2c;font-weight:700;">Completed</div>
<svg class="abs" style="left:1213px;top:547px;" width="28" height="28" viewBox="0 0 28 28"><circle cx="14" cy="14" r="14" fill="#c13a2d"/></svg>
<div class="t" style="left:1213.00px;width:28px;text-align:center;top:556.53px;font-size:10px;color:#fff;font-weight:700;">AS</div>
<div class="t" style="left:1252.8px;top:544.56px;font-size:14.7px;color:#1c1c28;font-weight:400;-webkit-text-stroke:0.25px #1c1c28">Akash Shrivastava</div>
<div class="t" style="left:1252.8px;top:567.13px;font-size:12.6px;color:#6b6d87;font-weight:400;letter-spacing:0.1px;">26 October 2022, 23:21</div>
<div class="abs" style="left:1592px;top:545px;width:137px;height:32px;background:#fff;border:1.5px solid #3a78d0;border-radius:4px"></div>
<svg class="abs" style="left:1611px;top:554px;" width="18" height="14" viewBox="0 0 18 14"><path d="M11.5 1.3 H3.6 Q1.6 1.3 1.6 3.3 V10.6 Q1.6 12.6 3.6 12.6 H14.1 Q16.1 12.6 16.1 10.6 V4.9" fill="none" stroke="#3a78d0" stroke-width="1.3" stroke-linecap="round"/><path d="M5.5 3.8 L11.9 7 L5.5 10.2 Z" fill="none" stroke="#3a78d0" stroke-width="1.3" stroke-linejoin="round"/></svg>
<div class="t" style="left:1635px;top:553.81px;font-size:14.7px;color:#3a78d0;font-weight:700;">Latest Run</div>
<svg class="abs" style="left:1838px;top:550px;" width="8" height="20" viewBox="0 0 8 20"><circle cx="4" cy="3.4" r="2" fill="#22232d"/><circle cx="4" cy="10" r="2" fill="#22232d"/><circle cx="4" cy="16.3" r="2" fill="#22232d"/></svg>
<div class="abs" style="left:288px;top:614px;width:1614px;height:90px;background:#fff;border-radius:4px;box-shadow:0 0 1px rgba(40,41,61,0.08),0 0.5px 2px rgba(96,97,112,0.16)"></div>
<div class="t" style="left:305.3px;top:636.30px;font-size:15px;color:#1c1c28;font-weight:400;letter-spacing:0.45px;-webkit-text-stroke:0.25px #1c1c28">run-nginx-disk-fill-c0v-vw3</div>
<div class="t" style="left:305px;top:667.39px;font-size:12.3px;color:#22232d;font-weight:400;">ID:</div>
<div class="abs" style="left:328px;top:665px;width:96px;height:18px;background:#efeff4;border-radius:9px"></div>
<div class="t" style="left:332.2px;top:667.48px;font-size:12.9px;color:#6b6d85;font-weight:400;">11bda88c-83...</div>
<svg class="abs" style="left:432px;top:665px;" width="16" height="16" viewBox="0 0 16 16"><path d="M5.5 3.3 V2.6 Q5.5 1.6 6.5 1.6 H13.8 Q14.8 1.6 14.8 2.6 V10.8 Q14.8 11.8 13.8 11.8 H13" fill="none" stroke="#3a78d0" stroke-width="1.4"/><rect x="1.1" y="4.1" width="9.65" height="10.7" rx="1.5" fill="#3a78d0"/></svg>
<svg class="abs" style="left:621px;top:630px;" width="16" height="18" viewBox="0 0 16 18"><path d="M1.8 1.8 L14 9 L1.8 16.2 Z" fill="none" stroke="#5f6275" stroke-width="1.7" stroke-linejoin="miter"/></svg>
<div class="t" style="left:653.6px;top:632.23px;font-size:15.2px;color:#676981;font-weight:400;-webkit-text-stroke:0.15px #676981">Non-cron</div>
<svg class="abs" style="left:621.3px;top:669.5px;" width="16" height="16" viewBox="0 0 16 16"><polygon points="7.80,0.70 13.19,3.30 14.53,9.14 10.79,13.82 4.81,13.82 1.07,9.14 2.41,3.30" fill="#3a62dc" stroke="#3a62dc" stroke-width="1.4" stroke-linejoin="round"/><circle cx="7.8" cy="7.6" r="3.4" fill="none" stroke="#e8ecfb" stroke-width="1.3"/><circle cx="7.8" cy="7.6" r="1.0" fill="#e8ecfb"/><g stroke="#e8ecfb" stroke-width="0.8"><line x1="7.80" y1="6.60" x2="7.80" y2="2.60"/><line x1="8.58" y1="6.98" x2="11.71" y2="4.48"/><line x1="8.77" y1="7.82" x2="12.67" y2="8.71"/><line x1="8.23" y1="8.50" x2="9.97" y2="12.10"/><line x1="7.37" y1="8.50" x2="5.63" y2="12.10"/><line x1="6.83" y1="7.82" x2="2.93" y2="8.71"/><line x1="7.02" y1="6.98" x2="3.89" y2="4.48"/></g></svg>
<div class="t" style="left:653.6px;top:669.78px;font-size:15.5px;color:#3977d0;font-weight:400;-webkit-text-stroke:0.15px #3977d0">vedant-test-infra</div>
<div class="abs" style="left:874px;top:632px;width:80px;height:55px;background:#f8f8f9"></div>
<div class="t" style="left:874.00px;width:80px;text-align:center;top:650.66px;font-size:18px;color:#c5382b;font-weight:400;">0%</div>
<div class="abs" style="left:1048px;top:647px;width:78px;height:24px;background:#e4f7e1;border-radius:4px"></div>
<div class="t" style="left:1048.00px;width:78px;text-align:center;top:653.09px;font-size:12.3px;color:#3f8c2c;font-weight:700;">Completed</div>
<svg class="abs" style="left:1213px;top:645px;" width="28" height="28" viewBox="0 0 28 28"><circle cx="14" cy="14" r="14" fill="#5aa556"/></svg>
<div class="t" style="left:1213.00px;width:28px;text-align:center;top:654.53px;font-size:10px;color:#fff;font-weight:700;">UG</div>
<div class="t" style="left:1252.8px;top:642.56px;font-size:14.7px;color:#1c1c28;font-weight:400;-webkit-text-stroke:0.25px #1c1c28">Udit Gaurav</div>
<div class="t" style="left:1252.8px;top:665.13px;font-size:12.6px;color:#6b6d87;font-weight:400;letter-spacing:0.1px;">26 October 2022, 20:27</div>
<div class="abs" style="left:1592px;top:643px;width:137px;height:32px;background:#fff;border:1.5px solid #3a78d0;border-radius:4px"></div>
<svg class="abs" style="left:1611px;top:652px;" width="18" height="14" viewBox="0 0 18 14"><path d="M11.5 1.3 H3.6 Q1.6 1.3 1.6 3.3 V10.6 Q1.6 12.6 3.6 12.6 H14.1 Q16.1 12.6 16.1 10.6 V4.9" fill="none" stroke="#3a78d0" stroke-width="1.3" stroke-linecap="round"/><path d="M5.5 3.8 L11.9 7 L5.5 10.2 Z" fill="none" stroke="#3a78d0" stroke-width="1.3" stroke-linejoin="round"/></svg>
<div class="t" style="left:1635px;top:651.81px;font-size:14.7px;color:#3a78d0;font-weight:700;">Latest Run</div>
<svg class="abs" style="left:1838px;top:648px;" width="8" height="20" viewBox="0 0 8 20"><circle cx="4" cy="3.4" r="2" fill="#22232d"/><circle cx="4" cy="10" r="2" fill="#22232d"/><circle cx="4" cy="16.3" r="2" fill="#22232d"/></svg>
<div class="abs" style="left:288px;top:712px;width:1614px;height:90px;background:#fff;border-radius:4px;box-shadow:0 0 1px rgba(40,41,61,0.08),0 0.5px 2px rgba(96,97,112,0.16)"></div>
<div class="t" style="left:305.3px;top:734.30px;font-size:15px;color:#1c1c28;font-weight:400;letter-spacing:0.45px;-webkit-text-stroke:0.25px #1c1c28">run-nginx-disk-fill-c0v</div>
<div class="t" style="left:305px;top:765.39px;font-size:12.3px;color:#22232d;font-weight:400;">ID:</div>
<div class="abs" style="left:328px;top:763px;width:96px;height:18px;background:#efeff4;border-radius:9px"></div>
<div class="t" style="left:332.2px;top:765.48px;font-size:12.9px;color:#6b6d85;font-weight:400;">93784f05-35...</div>
<svg class="abs" style="left:432px;top:763px;" width="16" height="16" viewBox="0 0 16 16"><path d="M5.5 3.3 V2.6 Q5.5 1.6 6.5 1.6 H13.8 Q14.8 1.6 14.8 2.6 V10.8 Q14.8 11.8 13.8 11.8 H13" fill="none" stroke="#3a78d0" stroke-width="1.4"/><rect x="1.1" y="4.1" width="9.65" height="10.7" rx="1.5" fill="#3a78d0"/></svg>
<svg class="abs" style="left:621px;top:728px;" width="16" height="18" viewBox="0 0 16 18"><path d="M1.8 1.8 L14 9 L1.8 16.2 Z" fill="none" stroke="#5f6275" stroke-width="1.7" stroke-linejoin="miter"/></svg>
<div class="t" style="left:653.6px;top:730.23px;font-size:15.2px;color:#676981;font-weight:400;-webkit-text-stroke:0.15px #676981">Non-cron</div>
<svg class="abs" style="left:621.3px;top:767.5px;" width="16" height="16" viewBox="0 0 16 16"><polygon points="7.80,0.70 13.19,3.30 14.53,9.14 10.79,13.82 4.81,13.82 1.07,9.14 2.41,3.30" fill="#3a62dc" stroke="#3a62dc" stroke-width="1.4" stroke-linejoin="round"/><circle cx="7.8" cy="7.6" r="3.4" fill="none" stroke="#e8ecfb" stroke-width="1.3"/><circle cx="7.8" cy="7.6" r="1.0" fill="#e8ecfb"/><g stroke="#e8ecfb" stroke-width="0.8"><line x1="7.80" y1="6.60" x2="7.80" y2="2.60"/><line x1="8.58" y1="6.98" x2="11.71" y2="4.48"/><line x1="8.77" y1="7.82" x2="12.67" y2="8.71"/><line x1="8.23" y1="8.50" x2="9.97" y2="12.10"/><line x1="7.37" y1="8.50" x2="5.63" y2="12.10"/><line x1="6.83" y1="7.82" x2="2.93" y2="8.71"/><line x1="7.02" y1="6.98" x2="3.89" y2="4.48"/></g></svg>
<div class="t" style="left:653.6px;top:767.78px;font-size:15.5px;color:#3977d0;font-weight:400;-webkit-text-stroke:0.15px #3977d0">vedant-test-infra</div>
<div class="abs" style="left:874px;top:730px;width:80px;height:55px;background:#f8f8f9"></div>
<div class="t" style="left:874.00px;width:80px;text-align:center;top:748.66px;font-size:18px;color:#c5382b;font-weight:400;">0%</div>
<div class="abs" style="left:1048px;top:745px;width:78px;height:24px;background:#e4f7e1;border-radius:4px"></div>
<div class="t" style="left:1048.00px;width:78px;text-align:center;top:751.09px;font-size:12.3px;color:#3f8c2c;font-weight:700;">Completed</div>
<svg class="abs" style="left:1213px;top:743px;" width="28" height="28" viewBox="0 0 28 28"><circle cx="14" cy="14" r="14" fill="#5aa556"/></svg>
<div class="t" style="left:1213.00px;width:28px;text-align:center;top:752.53px;font-size:10px;color:#fff;font-weight:700;">UG</div>
<div class="t" style="left:1252.8px;top:740.56px;font-size:14.7px;color:#1c1c28;font-weight:400;-webkit-text-stroke:0.25px #1c1c28">Udit Gaurav</div>
<div class="t" style="left:1252.8px;top:763.13px;font-size:12.6px;color:#6b6d87;font-weight:400;letter-spacing:0.1px;">26 October 2022, 20:24</div>
<div class="abs" style="left:1592px;top:741px;width:137px;height:32px;background:#fff;border:1.5px solid #3a78d0;border-radius:4px"></div>
<svg class="abs" style="left:1611px;top:750px;" width="18" height="14" viewBox="0 0 18 14"><path d="M11.5 1.3 H3.6 Q1.6 1.3 1.6 3.3 V10.6 Q1.6 12.6 3.6 12.6 H14.1 Q16.1 12.6 16.1 10.6 V4.9" fill="none" stroke="#3a78d0" stroke-width="1.3" stroke-linecap="round"/><path d="M5.5 3.8 L11.9 7 L5.5 10.2 Z" fill="none" stroke="#3a78d0" stroke-width="1.3" stroke-linejoin="round"/></svg>
<div class="t" style="left:1635px;top:749.81px;font-size:14.7px;color:#3a78d0;font-weight:700;">Latest Run</div>
<svg class="abs" style="left:1838px;top:746px;" width="8" height="20" viewBox="0 0 8 20"><circle cx="4" cy="3.4" r="2" fill="#22232d"/><circle cx="4" cy="10" r="2" fill="#22232d"/><circle cx="4" cy="16.3" r="2" fill="#22232d"/></svg>
<div class="abs" style="left:288px;top:810px;width:1614px;height:90px;background:#fff;border-radius:4px;box-shadow:0 0 1px rgba(40,41,61,0.08),0 0.5px 2px rgba(96,97,112,0.16)"></div>
<div class="t" style="left:305.3px;top:832.30px;font-size:15px;color:#1c1c28;font-weight:400;letter-spacing:0.45px;-webkit-text-stroke:0.25px #1c1c28">run-nginx-disk-fill</div>
<div class="t" style="left:305px;top:863.39px;font-size:12.3px;color:#22232d;font-weight:400;">ID:</div>
<div class="abs" style="left:328px;top:861px;width:96px;height:18px;background:#efeff4;border-radius:9px"></div>
<div class="t" style="left:332.2px;top:863.48px;font-size:12.9px;color:#6b6d85;font-weight:400;">76e8f434-76...</div>
<svg class="abs" style="left:432px;top:861px;" width="16" height="16" viewBox="0 0 16 16"><path d="M5.5 3.3 V2.6 Q5.5 1.6 6.5 1.6 H13.8 Q14.8 1.6 14.8 2.6 V10.8 Q14.8 11.8 13.8 11.8 H13" fill="none" stroke="#3a78d0" stroke-width="1.4"/><rect x="1.1" y="4.1" width="9.65" height="10.7" rx="1.5" fill="#3a78d0"/></svg>
<svg class="abs" style="left:621px;top:826px;" width="16" height="18" viewBox="0 0 16 18"><path d="M1.8 1.8 L14 9 L1.8 16.2 Z" fill="none" stroke="#5f6275" stroke-width="1.7" stroke-linejoin="miter"/></svg>
<div class="t" style="left:653.6px;top:828.23px;font-size:15.2px;color:#676981;font-weight:400;-webkit-text-stroke:0.15px #676981">Non-cron</div>
<svg class="abs" style="left:621.3px;top:865.5px;" width="16" height="16" viewBox="0 0 16 16"><polygon points="7.80,0.70 13.19,3.30 14.53,9.14 10.79,13.82 4.81,13.82 1.07,9.14 2.41,3.30" fill="#3a62dc" stroke="#3a62dc" stroke-width="1.4" stroke-linejoin="round"/><circle cx="7.8" cy="7.6" r="3.4" fill="none" stroke="#e8ecfb" stroke-width="1.3"/><circle cx="7.8" cy="7.6" r="1.0" fill="#e8ecfb"/><g stroke="#e8ecfb" stroke-width="0.8"><line x1="7.80" y1="6.60" x2="7.80" y2="2.60"/><line x1="8.58" y1="6.98" x2="11.71" y2="4.48"/><line x1="8.77" y1="7.82" x2="12.67" y2="8.71"/><line x1="8.23" y1="8.50" x2="9.97" y2="12.10"/><line x1="7.37" y1="8.50" x2="5.63" y2="12.10"/><line x1="6.83" y1="7.82" x2="2.93" y2="8.71"/><line x1="7.02" y1="6.98" x2="3.89" y2="4.48"/></g></svg>
<div class="t" style="left:653.6px;top:865.78px;font-size:15.5px;color:#3977d0;font-weight:400;-webkit-text-stroke:0.15px #3977d0">vedant-test-infra</div>
<div class="abs" style="left:874px;top:828px;width:80px;height:55px;background:#f8f8f9"></div>
<div class="t" style="left:874.00px;width:80px;text-align:center;top:846.66px;font-size:18px;color:#c5382b;font-weight:400;">0%</div>
<div class="abs" style="left:1048px;top:843px;width:78px;height:24px;background:#e4f7e1;border-radius:4px"></div>
<div class="t" style="left:1048.00px;width:78px;text-align:center;top:849.09px;font-size:12.3px;color:#3f8c2c;font-weight:700;">Completed</div>
<svg class="abs" style="left:1213px;top:841px;" width="28" height="28" viewBox="0 0 28 28"><circle cx="14" cy="14" r="14" fill="#5aa556"/></svg>
<div class="t" style="left:1213.00px;width:28px;text-align:center;top:850.53px;font-size:10px;color:#fff;font-weight:700;">UG</div>
<div class="t" style="left:1252.8px;top:838.56px;font-size:14.7px;color:#1c1c28;font-weight:400;-webkit-text-stroke:0.25px #1c1c28">Udit Gaurav</div>
<div class="t" style="left:1252.8px;top:861.13px;font-size:12.6px;color:#6b6d87;font-weight:400;letter-spacing:0.1px;">26 October 2022, 20:21</div>
<div class="abs" style="left:1592px;top:839px;width:137px;height:32px;background:#fff;border:1.5px solid #3a78d0;border-radius:4px"></div>
<svg class="abs" style="left:1611px;top:848px;" width="18" height="14" viewBox="0 0 18 14"><path d="M11.5 1.3 H3.6 Q1.6 1.3 1.6 3.3 V10.6 Q1.6 12.6 3.6 12.6 H14.1 Q16.1 12.6 16.1 10.6 V4.9" fill="none" stroke="#3a78d0" stroke-width="1.3" stroke-linecap="round"/><path d="M5.5 3.8 L11.9 7 L5.5 10.2 Z" fill="none" stroke="#3a78d0" stroke-width="1.3" stroke-linejoin="round"/></svg>
<div class="t" style="left:1635px;top:847.81px;font-size:14.7px;color:#3a78d0;font-weight:700;">Latest Run</div>
<svg class="abs" style="left:1838px;top:844px;" width="8" height="20" viewBox="0 0 8 20"><circle cx="4" cy="3.4" r="2" fill="#22232d"/><circle cx="4" cy="10" r="2" fill="#22232d"/><circle cx="4" cy="16.3" r="2" fill="#22232d"/></svg>
<div class="abs" style="left:1609px;top:250px;width:202px;height:272px;background:#333d4c;border-radius:3px;box-shadow:0 2px 6px rgba(0,0,0,0.09)"></div>
<svg class="abs" style="left:1809px;top:254px;" width="14" height="24" viewBox="0 0 14 24"><path d="M1 0 Q2 3 5.5 7 L11.5 11 Q12.5 12 11.5 13 L5.5 17 Q2 21 1 24 Z" fill="#1f2c45"/></svg>
<svg class="abs" style="left:1625px;top:266px;" width="16" height="16" viewBox="0 0 16 16"><path d="M2.5 12.2 L11.2 3.5 Q12.3 2.4 13.4 3.5 Q14.5 4.6 13.4 5.7 L4.7 14.4 L2.5 14.4 Z M10.2 4.5 L12.4 6.7" fill="none" stroke="#f3f4f8" stroke-width="1.1" stroke-linejoin="round"/></svg>
<div class="t" style="left:1651.2px;top:267.90px;font-size:14.65px;color:#f3f4f8;font-weight:400;-webkit-text-stroke:0.2px #f3f4f8">Edit Experiment</div>
<svg class="abs" style="left:1625px;top:307px;" width="16" height="16" viewBox="0 0 16 16"><path d="M2.5 1.8 L14 8.5 L2.5 15.2 Z" fill="none" stroke="#f3f4f8" stroke-width="1.6"/></svg>
<div class="t" style="left:1651.2px;top:307.50px;font-size:14.65px;color:#f3f4f8;font-weight:400;-webkit-text-stroke:0.2px #f3f4f8">Run Experiment</div>
<svg class="abs" style="left:1625px;top:347px;" width="16" height="16" viewBox="0 0 16 16"><path d="M8 2 V10.5 M4.6 7.2 L8 10.6 L11.4 7.2 M2.2 10.5 V14 H13.8 V10.5" fill="none" stroke="#f3f4f8" stroke-width="1.3"/></svg>
<div class="t" style="left:1651.2px;top:347.50px;font-size:14.65px;color:#f3f4f8;font-weight:400;-webkit-text-stroke:0.2px #f3f4f8">Download Experiment</div>
<div class="abs" style="left:1619px;top:380px;width:182px;height:1px;background:#566070"></div>
<svg class="abs" style="left:1625px;top:398px;" width="16" height="16" viewBox="0 0 16 16"><path d="M5.6 1.8 H10.4 M6.3 1.8 V6.2 L2.6 13.2 Q2.2 14.4 3.5 14.4 H12.5 Q13.8 14.4 13.4 13.2 L9.7 6.2 V1.8 M4.6 9.6 H11.4" fill="none" stroke="#f3f4f8" stroke-width="1.1"/></svg>
<div class="t" style="left:1651.2px;top:398.80px;font-size:14.65px;color:#f3f4f8;font-weight:400;-webkit-text-stroke:0.2px #f3f4f8">Add to Chaos Hub</div>
<svg class="abs" style="left:1625px;top:438px;" width="16" height="16" viewBox="0 0 16 16"><rect x="1.2" y="3" width="4" height="3" fill="none" stroke="#7b818d" stroke-width="1"/><path d="M5.2 4.5 H9 M3.2 6 V11 H9" fill="none" stroke="#7b818d" stroke-width="1"/><rect x="9" y="3" width="5.8" height="3" rx="1.2" fill="none" stroke="#7b818d" stroke-width="1"/><rect x="9" y="9.5" width="5.8" height="3" rx="1.2" fill="none" stroke="#7b818d" stroke-width="1"/></svg>
<div class="t" style="left:1651.2px;top:438.80px;font-size:14.65px;color:#7b818d;font-weight:400;-webkit-text-stroke:0.2px #7b818d">Add to Pipeline</div>
<div class="abs" style="left:1619px;top:471px;width:182px;height:1px;background:#566070"></div>
<svg class="abs" style="left:1625px;top:489px;" width="16" height="16" viewBox="0 0 16 16"><path d="M2.8 3.8 H13.2 M5.8 3.8 V2.2 H10.2 V3.8 M3.8 3.8 L4.6 14.2 H11.4 L12.2 3.8 M4.2 7 H11.8" fill="none" stroke="#f3f4f8" stroke-width="1.1"/></svg>
<div class="t" style="left:1651.2px;top:490.00px;font-size:14.65px;color:#f3f4f8;font-weight:400;-webkit-text-stroke:0.2px #f3f4f8">Delete Experiment</div>
<div class="t" style="left:304.5px;top:952.03px;font-size:12.6px;color:#22232d;font-weight:400;-webkit-text-stroke:0.25px #22232d">(1 - 7) of 46</div>
<div class="abs" style="left:779px;top:943px;width:520px;height:40px;background:#fff;border-radius:20px;box-shadow:0 0 2px rgba(40,41,61,0.08)"></div>
<div class="abs" style="left:866px;top:943px;width:47px;height:40px;background:#3b86d9"></div>
<div class="abs" style="left:961px;top:943px;width:1px;height:40px;background:#ececf2"></div>
<div class="abs" style="left:1011px;top:943px;width:1px;height:40px;background:#ececf2"></div>
<div class="abs" style="left:1061px;top:943px;width:1px;height:40px;background:#ececf2"></div>
<div class="abs" style="left:1110px;top:943px;width:1px;height:40px;background:#ececf2"></div>
<div class="abs" style="left:1159px;top:943px;width:1px;height:40px;background:#ececf2"></div>
<div class="abs" style="left:1207px;top:943px;width:1px;height:40px;background:#ececf2"></div>
<svg class="abs" style="left:799px;top:955px;" width="12" height="11" viewBox="0 0 12 11"><path d="M11 5.5 H2 M6 1.5 L2 5.5 L6 9.5" fill="none" stroke="#8b8fa0" stroke-width="1.4"/></svg>
<div class="t" style="left:814px;top:952.23px;font-size:14.5px;color:#8b8fa0;font-weight:400;">Prev</div>
<div class="t" style="left:866.00px;width:47px;text-align:center;top:951.65px;font-size:14px;color:#fff;font-weight:400;">1</div>
<div class="t" style="left:917.60px;width:40px;text-align:center;top:951.65px;font-size:14px;color:#3c7ad4;font-weight:400;">2</div>
<div class="t" style="left:966.80px;width:40px;text-align:center;top:951.65px;font-size:14px;color:#3c7ad4;font-weight:400;">3</div>
<div class="t" style="left:1015.80px;width:40px;text-align:center;top:951.65px;font-size:14px;color:#3c7ad4;font-weight:400;">4</div>
<div class="t" style="left:1065.00px;width:40px;text-align:center;top:951.65px;font-size:14px;color:#3c7ad4;font-weight:400;">5</div>
<div class="t" style="left:1114.00px;width:40px;text-align:center;top:951.65px;font-size:14px;color:#3c7ad4;font-weight:400;">6</div>
<div class="t" style="left:1162.50px;width:40px;text-align:center;top:951.65px;font-size:14px;color:#3c7ad4;font-weight:400;">7</div>
<div class="t" style="left:1227.8px;top:952.23px;font-size:14.5px;color:#3c7ad4;font-weight:400;">Next</div>
<svg class="abs" style="left:1266px;top:955px;" width="12" height="11" viewBox="0 0 12 11"><path d="M1 5.5 H10 M6 1.5 L10 5.5 L6 9.5" fill="none" stroke="#3c7ad4" stroke-width="1.4"/></svg>
<div class="t" style="left:1716px;top:950.48px;font-size:14.2px;color:#6b6d85;font-weight:400;">Show</div>
<div class="abs" style="left:1760px;top:943px;width:60px;height:40px;background:#fff;border:1px solid #d9dae5;border-radius:4px"></div>
<div class="t" style="left:1772.5px;top:951.15px;font-size:14px;color:#22232d;font-weight:400;">7</div>
<svg class="abs" style="left:1798px;top:958px;" width="10" height="6" viewBox="0 0 10 6"><path d="M1 1 L5 5 L9 1" fill="none" stroke="#6b6d85" stroke-width="1.2"/></svg>
<div class="t" style="left:1828.75px;top:950.40px;font-size:14.3px;color:#6b6d85;font-weight:400;">per page</div>
<div class="abs" style="left:272px;top:964px;width:1647px;height:16px;background:#fafbfd"></div>
</div>
</body></html>
